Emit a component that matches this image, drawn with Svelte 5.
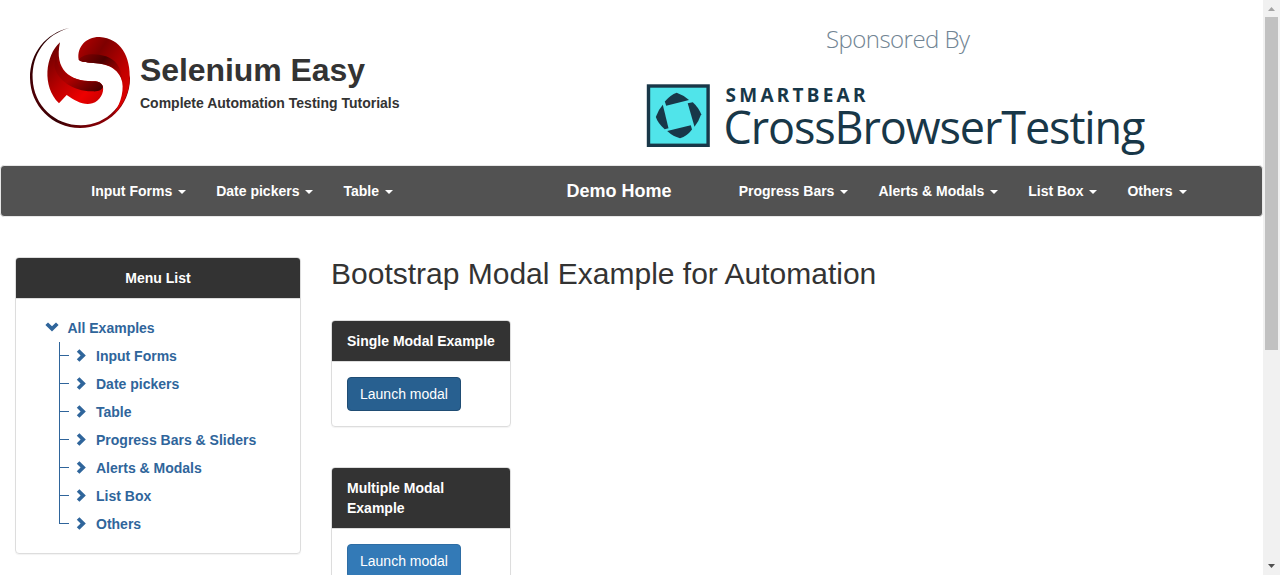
<script>
  const leftNav = ['Input Forms', 'Date pickers', 'Table'];
  const rightNav = ['Progress Bars', 'Alerts & Modals', 'List Box', 'Others'];
  const tree = ['Input Forms', 'Date pickers', 'Table', 'Progress Bars & Sliders', 'Alerts & Modals', 'List Box', 'Others'];
</script>

<div class="window">
  <div class="page">
    <header>
      <div class="brand">
        <svg class="logo" viewBox="0 0 360 345" width="120" height="115" aria-hidden="true">
          <defs>
            <linearGradient id="ring" x1="0" y1="0" x2="1" y2="1">
              <stop offset="0" stop-color="#180000" /><stop offset=".35" stop-color="#500006" /><stop offset=".6" stop-color="#380004" /><stop offset="1" stop-color="#c00006" />
            </linearGradient>
            <linearGradient id="leaf" x1="0" y1="0" x2="1" y2="1">
              <stop offset="0" stop-color="#5c0000" /><stop offset=".45" stop-color="#b90000" /><stop offset=".75" stop-color="#ed0000" /><stop offset="1" stop-color="#c30000" />
            </linearGradient>
            <linearGradient id="fold" x1="0" y1="0" x2="1" y2="1">
              <stop offset="0" stop-color="#750000" /><stop offset=".5" stop-color="#ad0000" /><stop offset="1" stop-color="#3c0000" />
            </linearGradient>
            <linearGradient id="bulb" x1="0" y1="0" x2="1" y2="1">
              <stop offset="0" stop-color="#ba0000" /><stop offset=".3" stop-color="#7e0000" /><stop offset=".65" stop-color="#c00000" /><stop offset="1" stop-color="#f00000" />
            </linearGradient>
            <linearGradient id="shade" x1="0" y1="0" x2="1" y2=".6">
              <stop offset="0" stop-color="#8a0000" /><stop offset=".5" stop-color="#4c0000" /><stop offset="1" stop-color="#b00000" />
            </linearGradient>
          </defs>
          <path fill="url(#ring)" d="M148 24C78 39 29 99 30 174C31 257 97 324 180 324C263 324 330 258 330 174L325 160C324 252 260 316 183 316C104 316 41 256 38 177C35 102 78 43 148 24Z" />
          <path fill="url(#leaf)" d="M120 67C76 107 65 199 117 250L140 225C166 243 191 257 217 250C241 243 252 217 249 201C246 188 234 183 216 184C150 184 102 149 120 67Z" />
          <path fill="url(#fold)" d="M108 103C108 151 154 184 216 184C234 183 246 188 249 201C246 210 235 215 219 214C164 216 110 181 103 138Z" />
          <path fill="url(#bulb)" d="M176 119C170 80 199 50 239 51C302 54 333 112 329 179C327 222 307 257 281 283C304 246 315 205 303 174C285 132 240 130 209 128C191 127 181 124 176 119Z" />
          <path fill="url(#shade)" d="M176 119C189 102 222 98 258 109C286 119 303 138 308 185C294 141 267 130 209 128C191 127 181 124 176 119Z" />
        </svg>
        <div class="brand-text">
          <h1>Selenium Easy</h1>
          <p>Complete Automation Testing Tutorials</p>
        </div>
      </div>
      <svg class="sponsor" viewBox="640 15 520 150" width="520" height="150">
        <text x="826" y="48" class="by" textLength="144">Sponsored By</text>
        <rect x="648.5" y="86" width="59.6" height="59.3" fill="#50e4ea" stroke="#183748" stroke-width="3.4" />
        <g fill="#183748">
          <path d="M666.2 105.8L664.8 101.5Q670.5 94.8 676.7 92.7Q683.5 95 689 100Z" />
          <path d="M687.7 103.3L692.8 102.2Q699 108 701.2 114.3Q699 121 694.5 126.7Z" />
          <path d="M667.2 131L690.8 125.2L692 129.5Q687 136.3 680 138.2Q673 136.5 667.2 131Z" />
          <path d="M662.8 104.7L668.5 128.2L664.7 129.2Q658 123.5 655.8 117Q658 110 662.8 104.7Z" />
        </g>
        <text x="725.5" y="102" class="smart" textLength="140">SMARTBEAR</text>
        <text x="723.5" y="143.7" class="cross" textLength="422">CrossBrowserTesting</text>
      </svg>
    </header>

    <nav>
      <div class="group left">
        {#each leftNav as item}<a>{item}<i class="caret"></i></a>{/each}
      </div>
      <a class="home">Demo Home</a>
      <div class="group right">
        {#each rightNav as item}<a>{item}<i class="caret"></i></a>{/each}
      </div>
    </nav>

    <main>
      <aside class="panel">
        <div class="heading center">Menu List</div>
        <div class="tree">
          <div class="root">
            <svg width="14" height="14" viewBox="0 0 14 14"><path d="M.4 5L3 2.4L7 6.3L11 2.4L13.6 5L7 11.4Z" fill="#2f659b" transform="translate(0 -1)" /></svg>
            <span>All Examples</span>
          </div>
          <ul>
            {#each tree as item}
              <li>
                <svg width="10" height="13" viewBox="0 0 10 13"><path d="M3.4.3L9.8 6.5L3.4 12.7L.8 10.2L4.6 6.5L.8 2.8Z" fill="#2f659b" /></svg>
                <span>{item}</span>
              </li>
            {/each}
          </ul>
        </div>
      </aside>
      <section>
        <h2>Bootstrap Modal Example for Automation</h2>
        <div class="panel example">
          <div class="heading">Single Modal Example</div>
          <div class="body"><button class="active">Launch modal</button></div>
        </div>
        <div class="panel example">
          <div class="heading">Multiple Modal Example</div>
          <div class="body"><button>Launch modal</button></div>
        </div>
      </section>
    </main>
  </div>
  <div class="scrollbar">
    <svg width="17" height="17" viewBox="0 0 17 17"><path d="M5 11L8.5 7L12 11Z" fill="#a3a3a3" /></svg>
    <div class="thumb"></div>
    <svg width="17" height="17" viewBox="0 0 17 17"><path d="M5 6L8.5 10L12 6Z" fill="#505050" /></svg>
  </div>
</div>

<style>
  :global(body) { margin: 0; overflow: hidden; }
  .window { display: flex; width: 1280px; height: 575px; overflow: hidden; background: #fff; color: #333; font: 14px/20px "Liberation Sans", Arial, sans-serif; }
  .window * { box-sizing: border-box; }
  .page { width: 1263px; height: 575px; overflow: hidden; }
  header { display: flex; justify-content: space-between; height: 165px; padding: 15px 103px 0 20px; }
  .brand { display: flex; padding-top: 5px; }
  .logo { flex: none; }
  .brand-text { padding-top: 32px; white-space: nowrap; }
  h1 { margin: 0; font-size: 32px; line-height: 36px; letter-spacing: -.07px; }
  p { margin: 5px 0 0; font-weight: bold; }
  .sponsor { flex: none; overflow: visible; }
  .by { font: 300 24px "Open Sans", sans-serif; fill: #718493; }
  .smart { font: 700 19px "Noto Sans", "Open Sans", sans-serif; fill: #183748; }
  .cross { font: 400 45px "Open Sans", sans-serif; fill: #183748; }
  nav { display: flex; align-items: center; width: 1263px; height: 52px; border: 1px solid #e7e7e7; border-radius: 4px; background: #525252; color: #fff; font-weight: bold; }
  .group { display: flex; gap: 30px; white-space: nowrap; }
  .group a { display: flex; align-items: center; }
  .left { width: 475.5px; padding-left: 90.3px; }
  .home { width: 172px; padding-left: 90px; font-size: 18px; white-space: nowrap; }
  .right { margin-left: 90.2px; }
  .caret { margin-left: 6px; margin-top: 1px; border: 4px solid transparent; border-top-color: #fff; border-bottom: 0; }
  main { display: flex; align-items: flex-start; gap: 30px; padding: 40px 15px 0; }
  .panel { border: 1px solid #ddd; border-radius: 4px; box-shadow: 0 1px 1px rgba(0, 0, 0, .05); }
  aside { width: 286px; height: 297px; }
  .heading { padding: 10px 15px; background: #333; color: #fff; font-weight: bold; border-bottom: 1px solid #ddd; border-radius: 3px 3px 0 0; }
  .center { text-align: center; }
  .tree { padding: 15px 29px; color: #2f659b; font-weight: bold; white-space: nowrap; }
  .root { display: flex; align-items: center; height: 28px; gap: 9px; }
  .root svg { margin-left: -.5px; }
  ul { list-style: none; margin: 0 0 0 14px; padding: 0; }
  li { display: flex; align-items: center; height: 28px; padding-left: 17px; gap: 10px; background: linear-gradient(#2f659b, #2f659b) 0 0 / 1px 28px no-repeat, linear-gradient(#2f659b, #2f659b) 0 13px / 10px 1px no-repeat; }
  li svg { margin-top: -1px; }
  li:last-child { background-size: 1px 14px, 10px 1px; }
  h2 { margin: 0 0 30px; font-size: 30px; line-height: 33px; font-weight: 400; }
  .example { width: 180px; margin-bottom: 40px; }
  .body { padding: 15px; }
  button { display: block; width: 114px; height: 34px; padding: 0; border: 1px solid #2e6da4; border-radius: 4px; background: #337ab7; color: #fff; font: inherit; }
  button.active { background: #286090; border-color: #204d74; }
  .scrollbar { width: 17px; height: 575px; display: flex; flex-direction: column; background: #f1f1f1; }
  .scrollbar svg { flex: none; }
  .thumb { width: 13px; height: 333px; margin: 0 2px auto; background: #c1c1c1; }
</style>
